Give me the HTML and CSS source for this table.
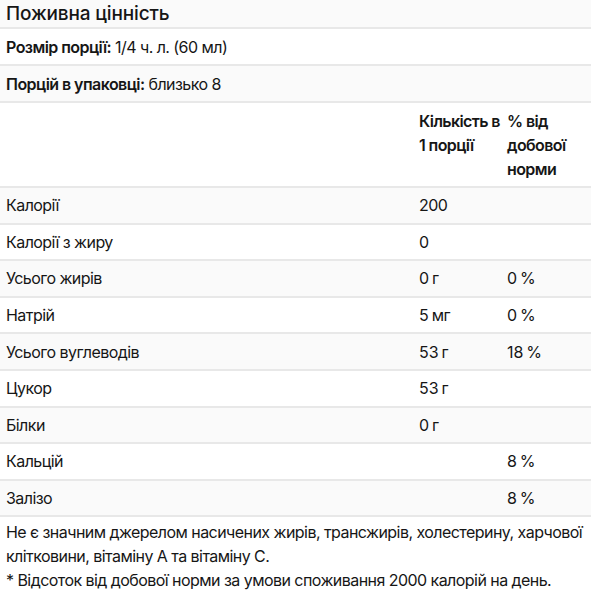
FILE: index.html
```html
<!DOCTYPE html>
<html lang="uk">
<head>
<meta charset="utf-8">
<link rel="stylesheet" href="styles.css">
</head>
<body>
<div class="panel">
  <div class="title">Поживна цінність</div>
  <div class="info alt-white"><b>Розмір порції:</b> 1/4 ч. л. (60 мл)</div>
  <div class="info alt-grey"><b>Порцій в упаковці:</b> близько 8</div>
  <table class="facts">
    <colgroup>
      <col class="c-name">
      <col class="c-amt">
      <col class="c-pct">
    </colgroup>
    <thead>
      <tr>
        <th></th>
        <th>Кількість в 1 порції</th>
        <th>% від добової норми</th>
      </tr>
    </thead>
    <tbody>
      <tr><td>Калорії</td><td>200</td><td></td></tr>
      <tr><td>Калорії з жиру</td><td>0</td><td></td></tr>
      <tr><td>Усього жирів</td><td>0&#8239;г</td><td>0&#8239;%</td></tr>
      <tr><td>Натрій</td><td>5&#8239;мг</td><td>0&#8239;%</td></tr>
      <tr><td>Усього вуглеводів</td><td>53&#8239;г</td><td>18&#8239;%</td></tr>
      <tr><td>Цукор</td><td>53&#8239;г</td><td></td></tr>
      <tr><td>Білки</td><td>0&#8239;г</td><td></td></tr>
      <tr><td>Кальцій</td><td></td><td>8&#8239;%</td></tr>
      <tr><td>Залізо</td><td></td><td>8&#8239;%</td></tr>
    </tbody>
  </table>
  <p class="note">Не є значним джерелом насичених жирів, трансжирів, холестерину, харчової клітковини, вітаміну А та вітаміну С.<br>* Відсоток від добової норми за умови споживання 2000 калорій на день.</p>
</div>
</body>
</html>
```
FILE: styles.css
```css
html, body {
  margin: 0;
  padding: 0;
  background: #ffffff;
}
body {
  font-family: "Inter", sans-serif;
  font-size: 16px;
  line-height: 24px;
  color: #161616;
  letter-spacing: -0.55px;
}
.panel {
  width: 591px;
}
.title {
  background: #fafafa;
  font-size: 19px;
  font-weight: 500;
  line-height: 27px;
  letter-spacing: -0.15px;
  padding: 0 6px;
  border-bottom: 2px solid #e8e8e8;
}
.info {
  padding: 5.5px 6px;
  border-bottom: 2px solid #e8e8e8;
}
.info b {
  font-weight: 600;
}
.alt-grey {
  background: #fafafa;
}
.alt-white {
  background: #ffffff;
}
.facts {
  width: 100%;
  border-collapse: collapse;
  table-layout: fixed;
}
.c-name { width: 413px; }
.c-amt { width: 88px; }
.c-pct { width: 90px; }
.facts th,
.facts td {
  text-align: left;
  vertical-align: top;
  padding: 5.3px 0 5.3px 6px;
  border-bottom: 2px solid #e8e8e8;
}
.facts th {
  font-weight: 600;
  letter-spacing: -0.6px;
  padding-top: 5.5px;
  padding-bottom: 5.5px;
}
.facts tbody tr:nth-child(odd) {
  background: #fafafa;
}
.note {
  margin: 0;
  padding: 3px 6px 0;
}
```
